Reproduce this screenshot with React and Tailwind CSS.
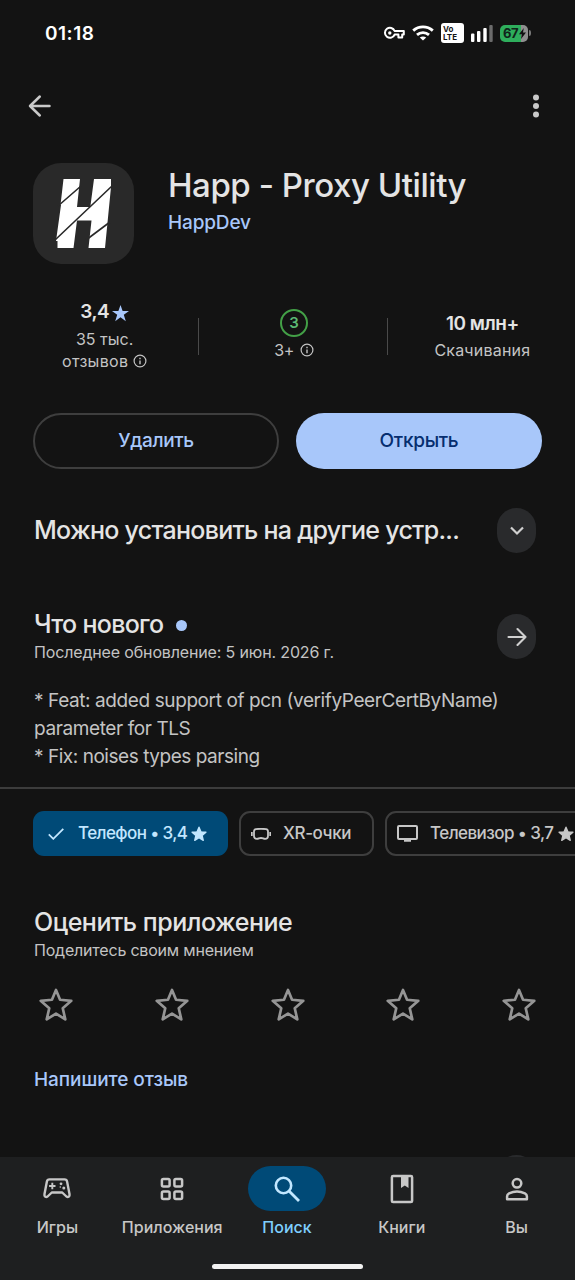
import React from "react";

const MARKS = ["01", "02", "03", "04", "05"];

const STAR = "M12 1.8l2.9 6.9 7.5.6-5.7 4.9 1.7 7.3L12 17.6l-6.4 3.9 1.7-7.3-5.7-4.9 7.5-.6z";

function Star({ className }) {
  return (
    <svg viewBox="0 0 24 24" className={className} fill="currentColor">
      <path d={STAR} stroke="currentColor" strokeWidth="2" strokeLinejoin="round" />
    </svg>
  );
}

function InfoIcon() {
  return (
    <svg viewBox="0 0 14 14" className="w-[14px] h-[14px]" fill="none" stroke="currentColor">
      <circle cx="7" cy="7" r="5.9" strokeWidth="1.2" />
      <path d="M7 6.4v3.8M7 3.8v1.4" strokeWidth="1.4" />
    </svg>
  );
}

function StatusBar() {
  return (
    <div className="h-[66px] pl-[45px] pr-[44px] flex items-center justify-between text-white">
      <span className="mt-[2px] text-[19px] font-semibold tracking-[0.5px]">01:18</span>
      <div className="flex items-center">
        <svg viewBox="0 0 22 14" className="w-[22px] h-[14px]" fill="none" stroke="currentColor">
          <path d="M11.6 5h9.2v3.6h-1.6v3h-3.8v-3h-3.8a5 5 0 1 1 0-3.6z" strokeWidth="2" strokeLinejoin="round" />
          <circle cx="6.8" cy="7" r="1.7" fill="currentColor" stroke="none" />
        </svg>
        <svg viewBox="0 0 22 16" className="w-[22px] h-[16px] ml-[7px]" fill="none" stroke="currentColor" strokeWidth="2.8">
          <path d="M1.2 5.6c5.6-5.1 14-5.1 19.6 0M5 9.9c3.4-3.1 8.6-3.1 12 0" />
          <path d="M11 15.6l-3.2-3.1c1.8-1.5 4.6-1.5 6.4 0z" fill="currentColor" stroke="none" />
        </svg>
        <div className="w-[23px] h-[20px] ml-[7px] bg-white rounded-[3px] text-[#141414] text-[8px] leading-[8px] font-bold pl-[2px] pt-[2px]">
          <div>Vo</div>
          <div>LTE</div>
        </div>
        <svg viewBox="0 0 22 17" className="w-[22px] h-[17px] ml-[7px]" fill="currentColor">
          <rect x="0" y="8.5" width="3.4" height="8.5" rx="1" />
          <rect x="6" y="6" width="3.4" height="11" rx="1" />
          <rect x="12.3" y="3" width="3.4" height="14" rx="1" />
          <rect x="18.3" y="0" width="3.4" height="17" rx="1" fill="#6b6b6b" />
        </svg>
        <div className="w-[28px] h-[17px] ml-[7px] rounded-[5px] bg-linear-to-r from-[#2eae5c] from-75% to-[#8f8f8f] to-75% flex items-center pl-[3px] text-[#10241a]">
          <span className="text-[13px] leading-none font-bold tracking-[-0.5px]">67</span>
          <svg viewBox="0 0 7 11" className="w-[7px] h-[11px] ml-px" fill="#111">
            <path d="M4.8 0L0 6.2h2.8L2 11l5-6.4H4z" />
          </svg>
        </div>
        <div className="w-[2px] h-[6px] ml-px rounded-r bg-[#777]" />
      </div>
    </div>
  );
}

function TopBar() {
  return (
    <div className="h-[80px] pl-[28px] pr-[35px] flex items-center justify-between text-[#c9c9c9]">
      <svg viewBox="0 0 24 24" className="w-[24px] h-[24px]" fill="none" stroke="currentColor" strokeWidth="2.5" strokeLinecap="round" strokeLinejoin="round">
        <path d="M21.5 12H2M11.8 2.5L2 12l9.8 9.5" />
      </svg>
      <svg viewBox="0 0 8 24" className="w-[8px] h-[24px]" fill="currentColor">
        <circle cx="4" cy="3.6" r="3" />
        <circle cx="4" cy="12" r="3" />
        <circle cx="4" cy="20.4" r="3" />
      </svg>
    </div>
  );
}

function AppHeader() {
  return (
    <div className="pt-[17px] pl-[33px] flex">
      <div className="w-[101px] h-[101px] rounded-[28px] bg-[#292929]">
        <svg viewBox="0 0 101 101" className="w-[101px] h-[101px]">
          <path d="M30.5 16H47l-3 28h13.3L61 16h17v8l-6 61H55.5l3-27.5H44L40.5 85h-16v-7H23l5-36h-.5z" fill="#fff" />
          <path d="M25 43l23-20M22 77l57-54M53 77l24-18" stroke="#292929" strokeWidth="1.6" />
        </svg>
      </div>
      <div className="pl-[34px]">
        <h1 className="mt-[2px] text-[33px] leading-[40px] font-[450] tracking-[-0.45px] text-[#e4e4e4] whitespace-nowrap">Happ - Proxy Utility</h1>
        <div className="mt-[5px] text-[19px] leading-[26px] font-medium tracking-[-0.15px] text-[#a8c7fa]">HappDev</div>
      </div>
    </div>
  );
}

function Stats() {
  return (
    <div className="h-[74px] mt-[35px] pl-[11px] flex items-center text-[#c4c4c4] text-[16px] leading-[22px]">
      <div className="w-[188px] h-full flex flex-col items-center">
        <div className="h-[29px] pb-[3px] flex items-center text-[19px] font-semibold tracking-[-0.5px] text-[#e4e4e4]">
          3,4
          <svg viewBox="0 0 16 16" className="w-[17px] h-[17px] ml-[3px] mt-[3px]" fill="#a8c7fa">
            <path d="M8 0l2 5.6h6l-4.9 3.6L13 15.2 8 11.6l-5 3.6 1.9-6L0 5.6h6z" />
          </svg>
        </div>
        <div>35 тыс.</div>
        <div className="flex items-center gap-[5px] tracking-[0.3px]">отзывов <InfoIcon /></div>
      </div>
      <div className="w-px h-[37px] bg-[#4a4a4a]" />
      <div className="w-[188px] h-full flex flex-col items-center pt-[10px] pl-[2px]">
        <div className="w-[28px] h-[28px] rounded-full border-2 border-[#43a047] text-[#5bb974] text-[15px] font-semibold flex items-center justify-center">3</div>
        <div className="mt-[2px] flex items-center gap-[6px] tracking-[-0.5px]">3+ <InfoIcon /></div>
      </div>
      <div className="w-px h-[37px] bg-[#4a4a4a]" />
      <div className="w-[188px] h-full flex flex-col items-center pt-[11px] pl-[2px]">
        <div className="h-[29px] text-[19px] leading-[27px] font-semibold tracking-[-0.5px] text-[#e4e4e4]">10 млн+</div>
        <div className="tracking-[0.2px]">Скачивания</div>
      </div>
    </div>
  );
}

function CircleButton({ children }) {
  return (
    <button className="w-[39px] h-[45px] rounded-[20px] bg-[#292a2c] flex items-center justify-center text-[#d0d0d0]">
      {children}
    </button>
  );
}

function Actions() {
  return (
    <div className="mt-[40px] px-[33px] flex justify-between text-[19px] font-medium">
      <button className="w-[246px] h-[56px] rounded-full border-2 border-[#3e3e3e] text-[#a8c7fa] tracking-[-0.35px]">Удалить</button>
      <button className="w-[246px] h-[56px] rounded-full bg-[#a8c7fa] text-[#062e6f] tracking-[-0.3px]">Открыть</button>
    </div>
  );
}

function OtherDevices() {
  return (
    <div className="mt-[39px] pl-[34px] pr-[39px] h-[45px] flex items-center justify-between">
      <h2 className="text-[25px] font-medium tracking-[-0.73px] text-[#e4e4e4] whitespace-nowrap">Можно установить на другие устр...</h2>
      <CircleButton>
        <svg viewBox="0 0 14 10" className="w-[14px] h-[10px]" fill="none" stroke="currentColor" strokeWidth="2.2">
          <path d="M1 1.5l6 6 6-6" />
        </svg>
      </CircleButton>
    </div>
  );
}

function WhatsNew() {
  return (
    <div className="mt-[57px] pl-[34px]">
      <div className="h-[54px] pr-[39px] flex justify-between">
        <div>
          <h2 className="h-[30px] flex items-center text-[25px] font-medium tracking-[-0.7px] text-[#e4e4e4]">
            Что нового
            <span className="w-[11px] h-[11px] ml-[13px] rounded-full bg-[#a8c7fa]" />
          </h2>
          <div className="text-[16px] leading-[24px] text-[#c4c4c4] whitespace-nowrap tracking-[-0.15px]">Последнее обновление: 5 июн. 2026 г.</div>
        </div>
        <div className="mt-[4px]">
          <CircleButton>
            <svg viewBox="0 0 20 20" className="w-[20px] h-[20px]" fill="none" stroke="currentColor" strokeWidth="2.1" strokeLinecap="round" strokeLinejoin="round">
              <path d="M1.5 10h17M10.5 2l8 8-8 8" />
            </svg>
          </CircleButton>
        </div>
      </div>
      <div className="mt-[23px] text-[19px] leading-[28px] tracking-[-0.4px] text-[#c4c4c4] whitespace-nowrap">
        <div>* Feat: added support of pcn (verifyPeerCertByName)</div>
        <div>parameter for TLS</div>
        <div className="tracking-[-0.46px]">* Fix: noises types parsing</div>
      </div>
    </div>
  );
}

function DeviceChips() {
  return (
    <div className="mt-[16px] pt-[22px] pl-[33px] border-t-2 border-[#3c3c3c] flex overflow-hidden text-[17px] font-medium text-[#c7c7c7] whitespace-nowrap">
      <div className="shrink-0 w-[195px] h-[45px] rounded-[11px] bg-[#004a77] text-[#c2e7ff] flex items-center pl-[15px]">
        <svg viewBox="0 0 16 12" className="w-[16px] h-[12px] mr-[14px]" fill="none" stroke="currentColor" strokeWidth="1.8">
          <path d="M.8 6.3l4.5 4.5L15.3.9" />
        </svg>
        <span className="tracking-[-0.6px]">Телефон • 3,4</span>
        <Star className="w-[16px] h-[16px] ml-[4px]" />
      </div>
      <div className="shrink-0 w-[135px] h-[45px] ml-[11px] rounded-[11px] border-2 border-[#3e3e3e] flex items-center pl-[10px]">
        <svg viewBox="0 0 20 12" className="w-[20px] h-[12px] mr-[12px]" fill="none" stroke="currentColor" strokeWidth="1.8">
          <path d="M5 1.1q5-.6 10 0 2 .3 2 2.4v4.5q0 2.9-2.8 2.9-1 0-2-.5-2.2-.8-4.4 0-1 .5-2 .5Q3 10.9 3 8V3.5q0-2.1 2-2.4zM.8 4v4M19.200 4v4" />
        </svg>
        <span className="tracking-[-0.4px]">XR-очки</span>
      </div>
      <div className="shrink-0 w-[220px] h-[45px] ml-[11px] rounded-[11px] border-2 border-[#3e3e3e] flex items-center pl-[10px]">
        <svg viewBox="0 0 21 17" className="w-[21px] h-[17px] mr-[12px]" fill="none" stroke="currentColor" strokeWidth="2">
          <rect x="1" y="1" width="19" height="13" rx="1" />
          <path d="M7 15.5h7" strokeWidth="2.5" />
        </svg>
        <span className="tracking-[-0.56px]">Телевизор • 3,7</span>
        <Star className="w-[16px] h-[16px] ml-[5px]" />
      </div>
    </div>
  );
}

function RateApp() {
  return (
    <div className="mt-[50px] px-[34px]">
      <h2 className="text-[25px] leading-[32px] font-medium tracking-[-0.47px] text-[#e4e4e4]">Оценить приложение</h2>
      <div className="text-[16px] leading-[24px] tracking-[-0.2px] text-[#c4c4c4]">Поделитесь своим мнением</div>
      <div className="mt-[25px] mx-[4px] flex justify-between text-[#959595]">
        {MARKS.map(m => (
          <svg key={m} viewBox="0 0 24 24" className="w-[36px] h-[36px]" fill="none" stroke="currentColor" strokeWidth="1.8" strokeLinejoin="round">
            <path d="M12 2l2.7 6.5 7.5.7-5.7 5 1.7 7.4L12 17.7l-6.200 3.900 1.700-7.400-5.700-5 7.500-.7z" />
          </svg>
        ))}
      </div>
      <div className="mt-[44px] text-[19px] leading-[26px] font-medium tracking-[-0.07px] text-[#a8c7fa]">Напишите отзыв</div>
    </div>
  );
}

function NavItem({ label, active, children }) {
  return (
    <div className="flex-1 flex flex-col items-center">
      <div className={active ? "w-[78px] h-[45px] rounded-full bg-[#004a77] text-[#c2e7ff] flex items-center justify-center" : "w-[78px] h-[45px] text-[#c7c7c7] flex items-center justify-center"}>
        {children}
      </div>
      <div className={active ? "mt-[5px] text-[16px] leading-[22px] font-medium text-[#7fcfff]" : "mt-[5px] text-[16px] leading-[22px] font-medium text-[#c7c7c7]"}>{label}</div>
    </div>
  );
}

function BottomNav() {
  return (
    <div className="h-[123px] shrink-0 bg-[#1e1f20] pt-[9px]">
      <div className="flex mr-px">
        <NavItem label="Игры">
          <svg viewBox="0 0 28 21" className="w-[28px] h-[21px]" fill="none" stroke="currentColor" strokeWidth="2.4" strokeLinejoin="round">
            <path d="M6.5 1.4h15q2.200 0 2.600 2.200L26.500 16q.4 3-1.800 3-1 0-1.800-1l-3.700-3.500H8.800L5.100 18q-.8 1-1.800 1-2.200 0-1.800-3L3.900 3.600q.4-2.200 2.600-2.200z" />
            <path d="M9.3 4.8v6.4M6.1 8h6.4" strokeWidth="1.9" />
            <g fill="currentColor" stroke="none">
              <circle cx="18" cy="5.8" r="1.4" />
              <circle cx="20.8" cy="9.9" r="1.5" />
              <circle cx="17.3" cy="9" r=".8" />
            </g>
          </svg>
        </NavItem>
        <NavItem label="Приложения">
          <svg viewBox="0 0 24 24" className="w-[24px] h-[24px]" fill="none" stroke="currentColor" strokeWidth="2.5">
            <rect x="1.9" y="1.9" width="7.7" height="7.7" rx="1.5" />
            <rect x="14.4" y="1.9" width="7.7" height="7.7" rx="1.5" />
            <rect x="1.9" y="14.4" width="7.7" height="7.7" rx="1.5" />
            <rect x="14.4" y="14.4" width="7.7" height="7.7" rx="1.5" />
          </svg>
        </NavItem>
        <NavItem label="Поиск" active>
          <svg viewBox="0 0 26 26" className="w-[26px] h-[26px]" fill="none" stroke="currentColor" strokeWidth="2.6">
            <circle cx="9.5" cy="9.5" r="7.7" />
            <path d="M15 15l10 10" strokeWidth="2.8" />
          </svg>
        </NavItem>
        <NavItem label="Книги">
          <svg viewBox="0 0 24 30" className="w-[24px] h-[30px]" fill="none" stroke="currentColor" strokeWidth="2.5">
            <rect x="1.9" y="2.1" width="20.2" height="26" rx="1.2" />
            <path d="M11 2.5h7.5v11.5l-3.7-2.5-3.8 2.5z" fill="currentColor" stroke="none" />
          </svg>
        </NavItem>
        <NavItem label="Вы">
          <svg viewBox="0 0 24 24" className="w-[24px] h-[24px]" fill="none" stroke="currentColor" strokeWidth="2.5">
            <circle cx="12" cy="6.3" r="4.3" />
            <path d="M2.1 22.2v-3q0-1.8 2-2.8 7.9-3.6 15.8 0 2 1 2 2.8v3z" strokeLinejoin="round" />
          </svg>
        </NavItem>
      </div>
      <div className="mt-[26px] mx-auto w-[151px] h-[5px] rounded-full bg-[#f2f2f2]" />
    </div>
  );
}

export default function App() {
  return (
    <div className="w-[575px] h-[1280px] flex flex-col overflow-hidden bg-[#131313] font-[Inter,'Liberation_Sans',sans-serif]">
      <div className="flex-1 min-h-0 overflow-hidden">
        <StatusBar />
        <TopBar />
        <AppHeader />
        <Stats />
        <Actions />
        <OtherDevices />
        <WhatsNew />
        <DeviceChips />
        <RateApp />
        {/* next section starts right above the nav */}
        <div className="mt-[62px] pr-[39px] flex justify-end">
          <CircleButton />
        </div>
      </div>
      <BottomNav />
    </div>
  );
}
